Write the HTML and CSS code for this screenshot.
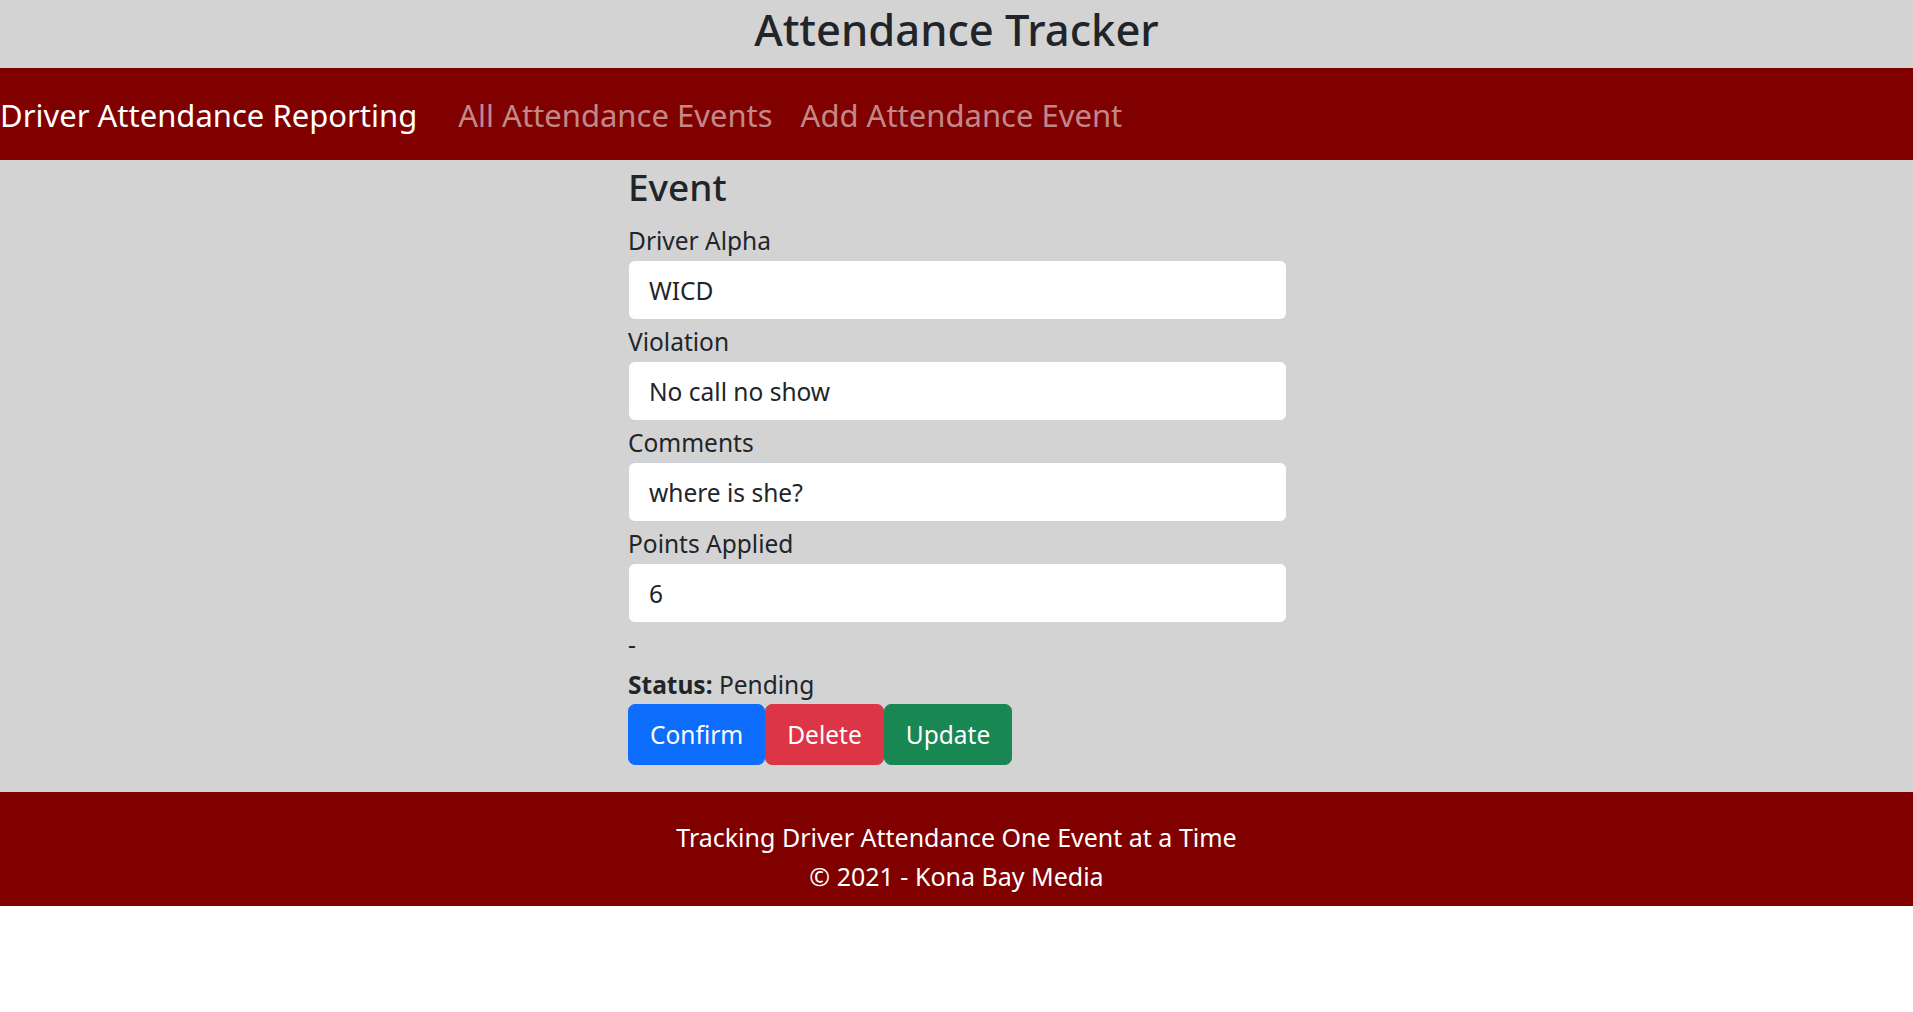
FILE: index.html
```html
<!DOCTYPE html>
<html lang="en">
<head>
<meta charset="utf-8">
<title>Attendance Tracker</title>
<link rel="stylesheet" href="styles.css">
</head>
<body>
<header class="site-header">
  <h1 class="site-title">Attendance Tracker</h1>
</header>
<nav class="navbar">
  <a class="brand" href="#">Driver Attendance Reporting</a>
  <ul class="nav-links">
    <li><a class="nav-link" href="#">All Attendance Events</a></li>
    <li><a class="nav-link" href="#">Add Attendance Event</a></li>
  </ul>
</nav>
<main class="main">
  <div class="event">
    <h2 class="event-title">Event</h2>
    <div class="field">
      <label class="field-label">Driver Alpha</label>
      <div class="field-control">WICD</div>
    </div>
    <div class="field">
      <label class="field-label">Violation</label>
      <div class="field-control">No call no show</div>
    </div>
    <div class="field">
      <label class="field-label">Comments</label>
      <div class="field-control">where is she?</div>
    </div>
    <div class="field">
      <label class="field-label">Points Applied</label>
      <div class="field-control">6</div>
    </div>
    <p class="dash">-</p>
    <p class="status"><strong>Status:</strong> Pending</p>
    <div class="actions">
      <button class="btn btn-confirm">Confirm</button><button class="btn btn-delete">Delete</button><button class="btn btn-update">Update</button>
    </div>
  </div>
</main>
<footer class="site-footer">
  <p class="footer-line">Tracking Driver Attendance One Event at a Time</p>
  <p class="footer-line">© 2021 - Kona Bay Media</p>
</footer>
</body>
</html>
```

FILE: styles.css
```css
html, body {
  margin: 0;
  padding: 0;
  background: #ffffff;
}
body {
  font-family: "Noto Sans", "Open Sans", sans-serif;
  color: #212529;
  font-size: 24.5px;
}
.site-header {
  background: #d3d3d3;
  height: 68px;
  box-sizing: border-box;
  padding-top: 1px;
  text-align: center;
}
.site-title {
  margin: 0;
  font-size: 43.5px;
  font-weight: 500;
  line-height: 56px;
  color: #212529;
}
.navbar {
  background: #800000;
  height: 92px;
  box-sizing: border-box;
  padding-top: 2px;
  display: flex;
  align-items: center;
}
.brand {
  color: #ffffff;
  text-decoration: none;
  font-size: 31px;
  line-height: 45px;
  margin-right: 41px;
}
.nav-links {
  list-style: none;
  display: flex;
  gap: 28px;
  margin: 0;
  padding: 0;
}
.nav-link {
  color: rgba(255, 255, 255, 0.55);
  text-decoration: none;
  font-size: 31px;
  line-height: 45px;
}
.main {
  background: #d3d3d3;
  padding-bottom: 27px;
}
.event {
  width: 659px;
  margin-left: 628px;
}
.event-title {
  margin: 0 0 9px;
  font-size: 37px;
  font-weight: 500;
  line-height: 54px;
}
.field {
  margin-bottom: 4px;
}
.field-label {
  display: block;
  line-height: 36px;
  margin-bottom: 1px;
}
.field-control {
  background: #ffffff;
  border: 1px solid #ced4da;
  border-radius: 7px;
  height: 60px;
  box-sizing: border-box;
  padding: 0 20px;
  display: flex;
  align-items: center;
}
.dash {
  margin: 3px 0 0;
  line-height: 36px;
}
.status {
  margin: 4px 0 1px;
  line-height: 36px;
}
.status strong {
  font-weight: 700;
}
.actions {
  display: flex;
}
.btn {
  font-family: inherit;
  font-size: 24.5px;
  color: #ffffff;
  border: 1px solid transparent;
  border-radius: 7px;
  height: 61px;
  padding: 0 21px;
  cursor: pointer;
}
.btn-confirm {
  background: #0d6efd;
  border-color: #0d6efd;
}
.btn-delete {
  background: #dc3545;
  border-color: #dc3545;
}
.btn-update {
  background: #198754;
  border-color: #198754;
}
.site-footer {
  background: #800000;
  color: #ffffff;
  text-align: center;
  height: 114px;
  box-sizing: border-box;
  padding-top: 26px;
}
.footer-line {
  margin: 0;
  line-height: 39px;
  font-size: 25px;
}
```
